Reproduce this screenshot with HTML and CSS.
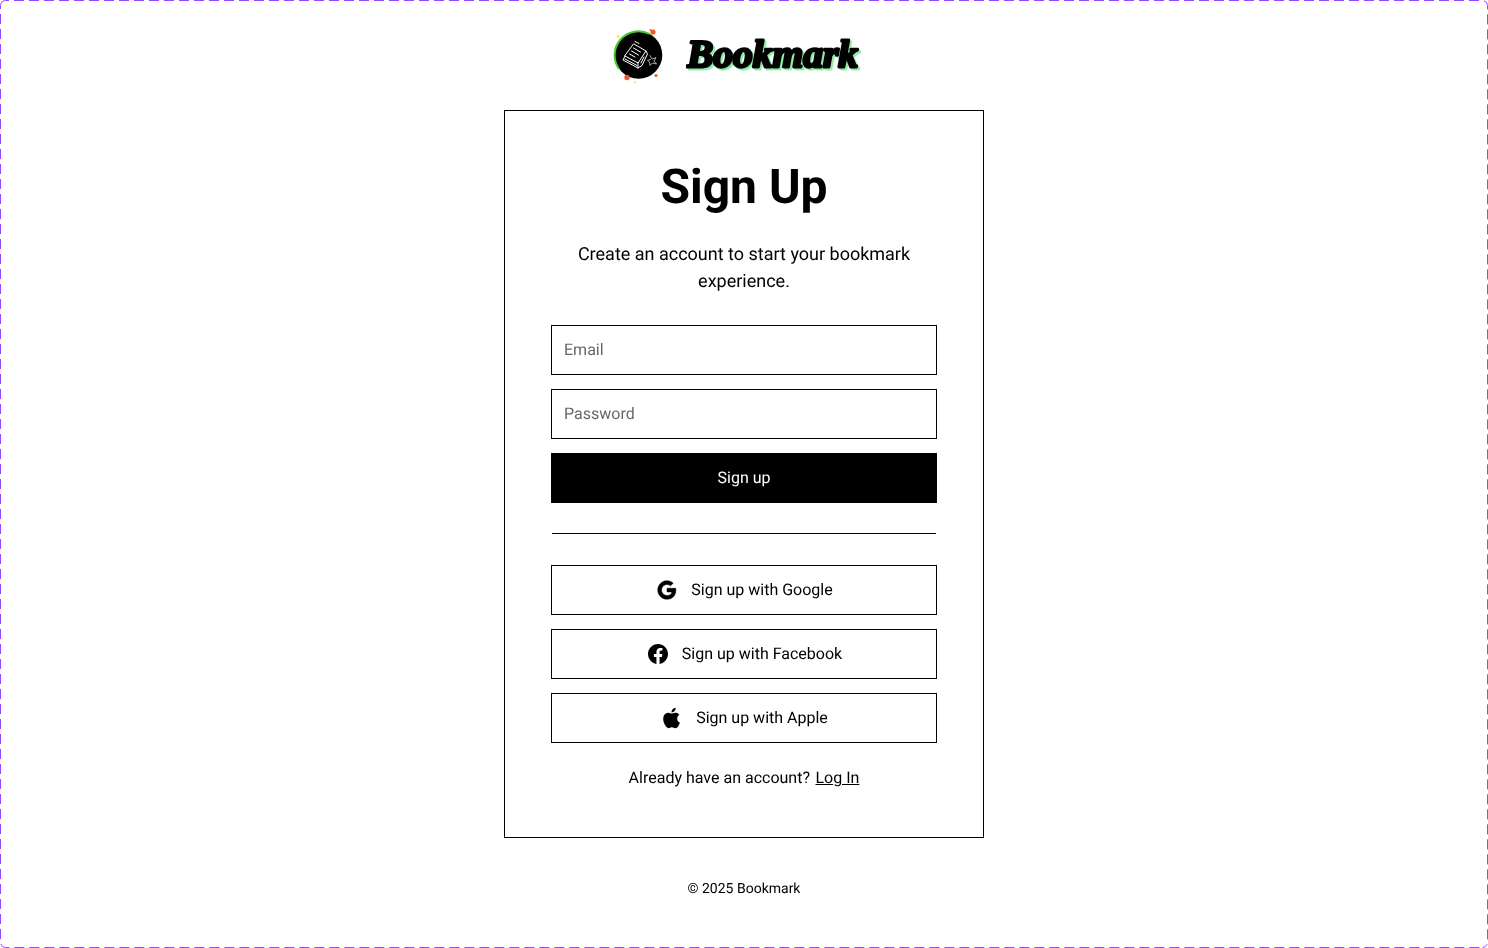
FILE: index.html
```html
<!DOCTYPE html>
<html lang="en">
<head>
<meta charset="utf-8">
<title>Bookmark - Sign Up</title>
<link rel="stylesheet" href="styles.css">
</head>
<body>
<div class="frame">
  <svg class="frame-outline" viewBox="0 0 1488 948" aria-hidden="true">
    <path class="frame-dash" d="M5.500 .5H1482.500A5 5 0 0 1 1487.500 5.500V942.500A5 5 0 0 1 1482.500 947.500"/>
    <path class="frame-dash" d="M.5 5.500V942.500A5 5 0 0 0 5.500 947.500H1482.500"/>
    <path class="frame-corner" d="M.5 5.500A5 5 0 0 1 5.500 .5"/>
  </svg>

  <header class="brand">
    <svg class="brand-mark" viewBox="0 0 56 58" aria-hidden="true">
      <circle cx="28.500" cy="29" r="23.800" fill="#000"/>
      <path class="mark-arc" d="M9 43 A24 24 0 0 1 39.500 7.800"/>
      <path class="mark-arc-thin" d="M41.500 9 A24 24 0 0 1 44.500 11.500"/>
      <circle class="dot-red" cx="43" cy="6" r="2.600"/>
      <circle class="dot-red" cx="40.500" cy="4" r="1"/>
      <circle class="dot-red" cx="17" cy="51.500" r="2.700"/>
      <circle class="dot-red" cx="46" cy="49.500" r="1.600"/>
      <circle class="dot-yellow" cx="8" cy="10.500" r="1.300"/>
      <circle class="dot-yellow" cx="25" cy="56" r="1"/>
      <g class="mark-lines">
        <path d="M24 18 L36 25 L28 37 L15 30 Z"/>
        <path d="M25 15.500 L29 17.500 M23.500 22 L30.500 26 M21.500 25 L28.500 29 M19.500 28 L25 31"/>
        <path d="M15 30 L13 34 L28 42 L32 39.500 L37.500 28 L36 25"/>
        <path d="M28 37 L28 42 M15 33 L27 39.500 M31 37 L34 31"/>
        <path class="mark-star" d="M40 29.500 L42 33 L46 31.500 L44 35 L46.500 38 L42.500 37 L40 39.500 L39.500 36 L37.500 34.500 L40.500 33.500"/>
      </g>
    </svg>
    <svg class="brand-word" viewBox="0 0 192 58" role="img" aria-label="Bookmark">
      <text class="brand-text" x="1" y="40.500" textLength="171" lengthAdjust="spacingAndGlyphs">Bookmark</text>
    </svg>
  </header>

  <main class="card">
    <h1 class="title">Sign Up</h1>
    <p class="lead">Create an account to start your bookmark experience.</p>
    <form class="fields">
      <input class="field" type="email" placeholder="Email">
      <input class="field" type="password" placeholder="Password">
      <button class="btn btn-primary" type="button"><span class="btn-label">Sign up</span></button>
    </form>
    <hr class="divider">
    <div class="socials">
      <button class="btn btn-outline" type="button">
        <svg class="icon icon-heavy" viewBox="-1 -1 26 26" aria-hidden="true"><path d="M3.06364 7.50914C4.70909 4.24092 8.09084 2 12 2C14.6954 2 16.959 2.99095 18.6909 4.60455L15.8227 7.47274C14.7864 6.48185 13.4681 5.97727 12 5.97727C9.39542 5.97727 7.19084 7.73637 6.40455 10.1C6.2045 10.7 6.09086 11.3409 6.09086 12C6.09086 12.6591 6.2045 13.3 6.40455 13.9C7.19084 16.2636 9.39542 18.0227 12 18.0227C13.3454 18.0227 14.4909 17.6682 15.3864 17.0682C16.4454 16.3591 17.15 15.3 17.3818 14.05H12V10.1818H21.4181C21.5364 10.8363 21.6 11.5182 21.6 12.2273C21.6 15.2727 20.5091 17.8363 18.6181 19.5773C16.9636 21.1046 14.7 22 12 22C8.09084 22 4.70909 19.7591 3.06364 16.4909C2.38638 15.1409 2 13.6136 2 12C2 10.3864 2.38638 8.85911 3.06364 7.50914Z"/></svg>
        <span class="btn-label">Sign up with Google</span>
      </button>
      <button class="btn btn-outline" type="button">
        <svg class="icon" viewBox="0 0 24 24" aria-hidden="true"><path d="M12.001 2C6.47813 2 2.00098 6.47715 2.00098 12C2.00098 16.9913 5.65783 21.1283 10.4385 21.8785V14.8906H7.89941V12H10.4385V9.79688C10.4385 7.29063 11.9314 5.90625 14.2156 5.90625C15.3097 5.90625 16.4541 6.10156 16.4541 6.10156V8.5625H15.1931C13.9509 8.5625 13.5635 9.33334 13.5635 10.1242V12H16.3369L15.8936 14.8906H13.5635V21.8785C18.3441 21.1283 22.001 16.9913 22.001 12C22.001 6.47715 17.5238 2 12.001 2Z"/></svg>
        <span class="btn-label">Sign up with Facebook</span>
      </button>
      <button class="btn btn-outline" type="button">
        <svg class="icon" viewBox="-1 -1 26 26" aria-hidden="true"><path d="M11.6734 7.2221C10.7974 7.2221 9.44138 6.2261 8.01338 6.2621C6.12938 6.2861 4.40138 7.3541 3.42938 9.0461C1.47338 12.4421 2.92538 17.4581 4.83338 20.2181C5.76938 21.5621 6.87338 23.0741 8.33738 23.0261C9.74138 22.9661 10.2694 22.1141 11.9734 22.1141C13.6654 22.1141 14.1454 23.0261 15.6334 22.9901C17.1454 22.9661 18.1054 21.6221 19.0294 20.2661C20.0974 18.7061 20.5414 17.1941 20.5654 17.1101C20.5294 17.0981 17.6254 15.9821 17.5894 12.6221C17.5654 9.8141 19.8814 8.4701 19.9894 8.4101C18.6694 6.4781 16.6414 6.2621 15.9334 6.2141C14.0854 6.0701 12.5374 7.2221 11.6734 7.2221ZM14.7934 4.3901C15.5734 3.4541 16.0894 2.1461 15.9454 0.850098C14.8294 0.898098 13.4854 1.5941 12.6814 2.5301C11.9614 3.3581 11.3374 4.6901 11.5054 5.9621C12.7414 6.0581 14.0134 5.3261 14.7934 4.3901Z"/></svg>
        <span class="btn-label">Sign up with Apple</span>
      </button>
    </div>
    <p class="switch"><span>Already have an account?</span><a class="switch-link" href="#">Log In</a></p>
  </main>

  <footer class="foot">© 2025 Bookmark</footer>
</div>
</body>
</html>
```

FILE: styles.css
```css
* { box-sizing: border-box; }

html, body { margin: 0; padding: 0; }

body {
  background: #fff;
  color: #000;
  font-family: Roboto, "Liberation Sans", sans-serif;
  text-rendering: geometricPrecision;
}

.frame {
  position: relative;
  width: 1488px;
  height: 948px;
  padding-top: 26px;
  display: flex;
  flex-direction: column;
  align-items: center;
  overflow: hidden;
  will-change: transform;
}

.frame-outline {
  position: absolute;
  inset: 0;
  width: 1488px;
  height: 948px;
  pointer-events: none;
}

.frame-dash {
  fill: none;
  stroke: #9747ff;
  stroke-width: 1;
  stroke-dasharray: 10 5;
  stroke-dashoffset: -8.5;
}

.frame-corner {
  fill: none;
  stroke: #9747ff;
  stroke-width: 1;
}

.brand {
  display: flex;
  align-items: center;
  gap: 20px;
  margin-bottom: 26px;
}

.brand-mark {
  display: block;
  flex: none;
  width: 56px;
  height: 58px;
}

.brand-word {
  display: block;
  flex: none;
  width: 192px;
  height: 58px;
  filter: drop-shadow(2px 2px 0 #8cf0a8);
}

.brand-text {
  font-family: "Liberation Serif", serif;
  font-size: 39px;
  font-style: italic;
  font-weight: 700;
  fill: #000;
  stroke: #000;
  stroke-width: 2.8px;
  stroke-linejoin: round;
}

.mark-arc {
  fill: none;
  stroke: #49c92d;
  stroke-width: 2;
}

.mark-arc-thin {
  fill: none;
  stroke: #49c92d;
  stroke-width: 1;
}

.dot-red { fill: #ef5a2c; }

.dot-yellow { fill: #ffd94d; }

.mark-lines {
  fill: none;
  stroke: #fff;
  stroke-width: 1;
  stroke-linejoin: round;
  stroke-linecap: round;
}

.mark-star { stroke: #bdbdbd; stroke-width: .9; }

.card {
  width: 480px;
  height: 728px;
  border: 1px solid #000;
  padding: 47px 46px;
}

.title {
  margin: 0 0 25px;
  font-size: 48px;
  font-weight: 700;
  line-height: 58px;
  text-align: center;
}

.lead {
  margin: 0 0 30px;
  padding: 0 20px;
  font-size: 18px;
  line-height: 27px;
  text-align: center;
}

.fields,
.socials {
  display: flex;
  flex-direction: column;
  gap: 14px;
}

.field,
.btn {
  width: 100%;
  height: 50px;
  border: 1px solid #000;
  border-radius: 0;
  font-family: inherit;
  font-size: 16px;
  text-rendering: geometricPrecision;
  background: #fff;
  color: #000;
}

.field {
  padding: 0 12px 2px;
  outline: none;
}

.field::placeholder { color: #666; opacity: 1; }

.btn {
  display: flex;
  align-items: center;
  justify-content: center;
  gap: 12px;
  padding: 0;
}

.btn-primary {
  background: #000;
  color: #fff;
}

.btn-label { padding-bottom: 2px; }

.icon {
  width: 24px;
  height: 24px;
  flex: none;
  fill: #000;
}

.icon-heavy {
  stroke: #000;
  stroke-width: .6;
}

.divider {
  margin: 30px 1px 31px;
  border: 0;
  border-top: 1px solid #000;
}

.switch {
  display: flex;
  justify-content: center;
  gap: 5.5px;
  margin: 23px 0 0;
  font-size: 16px;
  line-height: 24px;
}

.switch-link {
  color: #000;
  text-decoration: underline;
}

.foot {
  margin-top: 41px;
  font-size: 14px;
  line-height: 21px;
}
```
